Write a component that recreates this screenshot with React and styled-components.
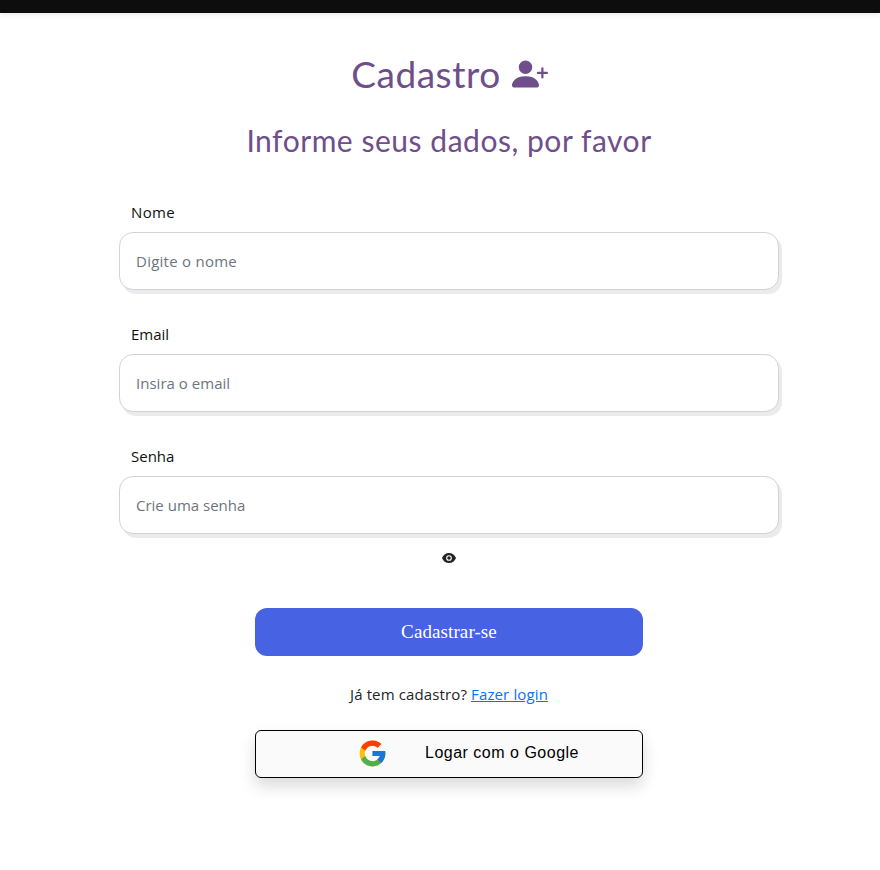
import React from "react";
import styled, { createGlobalStyle } from "styled-components";
import { BsPersonPlusFill } from "react-icons/bs";
import { FcGoogle } from "react-icons/fc";

const GlobalStyle = createGlobalStyle`
  *, *::before, *::after { box-sizing: border-box; }
  body {
    margin: 0;
    min-height: 100vh;
    background: #fff;
    color: #212529;
    font: 400 15px/24px "Open Sans", "Noto Sans", sans-serif;
  }
`;

const TopBar = styled.header`
  height: 13px;
  background: #0d0d0d;
  box-shadow: 0 2px 4px rgba(0, 0, 0, 0.075);
`;

const Page = styled.main`
  display: flex;
  flex-direction: column;
  align-items: center;
  width: 660px;
  margin: 0 0 0 119px;
  padding: 37px 0 48px;
`;

const Title = styled.h1`
  display: flex;
  align-items: center;
  gap: 11px;
  margin: 0 0 0 1px;
  height: 48px;
  color: #6f4e8b;
  font: 400 37px/48px Lato, sans-serif;
  letter-spacing: 0.55px;
`;

const Subtitle = styled.h2`
  margin: 23px 0 0;
  color: #6f4e8b;
  font: 400 30px/38px Lato, sans-serif;
  letter-spacing: 0.53px;
  white-space: nowrap;
`;

const Form = styled.form`
  display: flex;
  flex-direction: column;
  align-items: center;
  width: 100%;
  margin-top: 41px;
`;

const Field = styled.div`
  width: 100%;
  margin-bottom: ${(p) => (p.$last ? 0 : 32)}px;
`;

const Label = styled.label`
  display: block;
  height: 24px;
  margin: 0 0 8px 12px;
  color: #0f1113;
  letter-spacing: ${(p) => p.$spacing}px;
`;

const Input = styled.input`
  display: block;
  width: 100%;
  height: 58px;
  padding: 0 16px;
  border: 1px solid #ced4da;
  border-radius: 14px;
  background: #fff;
  box-shadow: 3px 4px 0 #ebebeb;
  font: inherit;
  letter-spacing: ${(p) => p.$spacing}px;

  &::placeholder { color: #6c757d; opacity: 1; }
`;

const ShowPassword = styled.button`
  display: flex;
  margin-top: 16px;
  padding: 0;
  border: 0;
  background: none;
  color: #212529;
`;

const Submit = styled.button`
  width: 388px;
  height: 48px;
  margin-top: 42px;
  border: 0;
  border-radius: 12px;
  background: #4763e4;
  color: #fff;
  font: 400 19px/24px "Liberation Serif", serif;
  letter-spacing: 0.1px;
`;

const LoginHint = styled.p`
  margin: 26px 0 0;
  letter-spacing: 0.13px;
  white-space: nowrap;
`;

const Link = styled.a`
  color: #0d6efd;
  text-decoration: underline;
`;

const GoogleButton = styled.button`
  display: flex;
  align-items: center;
  width: 388px;
  height: 48px;
  margin-top: 24px;
  padding: 0 0 1px 101px;
  border: 1px solid #000;
  border-radius: 6px;
  background: #fafafa;
  box-shadow: 0 8px 16px rgba(0, 0, 0, 0.15);
  color: #000;
  font: 400 16px/24px "Liberation Sans", Arial, sans-serif;
  letter-spacing: 0.5px;
`;

const GoogleLabel = styled.span`
  margin: 0 0 2px 37px;
`;

const EyeIcon = () => (
  <svg width="16" height="16" viewBox="0 0 16 16" aria-hidden="true">
    <path
      fill="currentColor"
      d="M8 3C4.7 3 2.2 5 1 8c1.2 3 3.7 5 7 5s5.8-2 7-5c-1.2-3-3.7-5-7-5z"
    />
    <circle cx="8" cy="8" r="2.3" fill="none" stroke="#fff" strokeWidth="1.1" />
  </svg>
);

const fields = [
  { id: "nome", label: "Nome", placeholder: "Digite o nome", type: "text", labelSpacing: 0.35, spacing: 0.25 },
  { id: "email", label: "Email", placeholder: "Insira o email", type: "email", labelSpacing: 0, spacing: 0.02 },
  { id: "senha", label: "Senha", placeholder: "Crie uma senha", type: "password", labelSpacing: 0, spacing: 0 },
];

export default function App() {
  return (
    <>
      <GlobalStyle />
      <TopBar />
      <Page>
        <Title>
          Cadastro <BsPersonPlusFill size={36} />
        </Title>
        <Subtitle>Informe seus dados, por favor</Subtitle>
        <Form>
          {fields.map((f, i) => (
            <Field key={f.id} $last={i === fields.length - 1}>
              <Label htmlFor={f.id} $spacing={f.labelSpacing}>{f.label}</Label>
              <Input id={f.id} type={f.type} placeholder={f.placeholder} $spacing={f.spacing} />
            </Field>
          ))}
          <ShowPassword type="button" aria-label="Mostrar senha">
            <EyeIcon />
          </ShowPassword>
          <Submit type="button">Cadastrar-se</Submit>
          <LoginHint>
            Já tem cadastro? <Link href="#">Fazer login</Link>
          </LoginHint>
          <GoogleButton type="button">
            <FcGoogle size={31} />
            <GoogleLabel>Logar com o Google</GoogleLabel>
          </GoogleButton>
        </Form>
      </Page>
    </>
  );
}
